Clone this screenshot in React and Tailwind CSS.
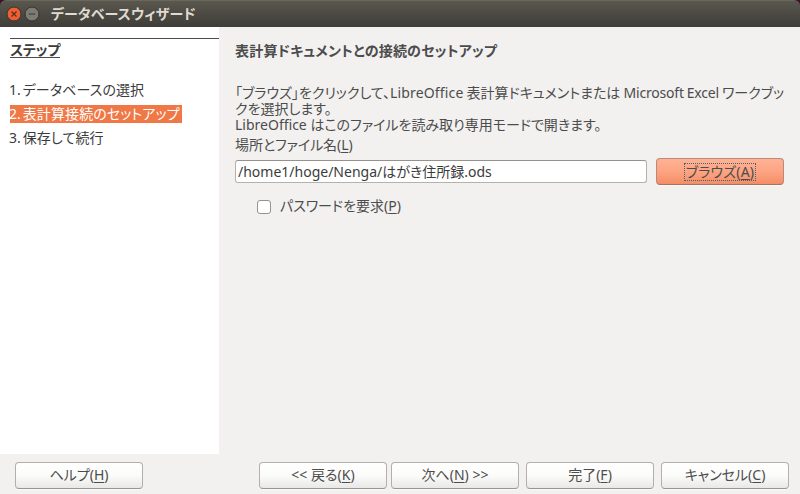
const STEPS = [
  { num: "1.", label: "データベースの選択" },
  { num: "2.", label: "表計算接続のセットアップ", active: true },
  { num: "3.", label: "保存して続行" },
];

const BUTTON_COLORS = {
  normal: "border-[#b3b0aa] border-b-[#99958e] from-white via-[#fbfbfa] to-[#e9e8e7]",
  focused: "border-[#b98a78] border-b-[#a8735c] from-[#ffb294] via-[#fca483] to-[#f58d65]",
};

function Mnemonic({ children }) {
  return (
    <span>
      (<span className="underline underline-offset-2 decoration-1">{children}</span>)
    </span>
  );
}

function Button({ children, variant = "normal", className = "" }) {
  return (
    <button
      className={`h-[27px] w-32 shrink-0 rounded-[4px] border bg-linear-to-b pb-px text-center leading-6 whitespace-nowrap shadow-[0_1px_0_#fafafa] ${BUTTON_COLORS[variant]} ${className}`}
    >
      {children}
    </button>
  );
}

function TitleBar() {
  return (
    <div className="bg-[#3b0f28]">
      <header className="flex h-[27px] items-center rounded-t-[6px] border-t border-[#6a675e] bg-linear-to-b from-[#5a574e] to-[#3e3d38] pl-[6px]">
        <svg width="34" height="16" viewBox="0 0 34 16">
          <circle cx="8" cy="8" r="7" fill="#ee6034" stroke="#35332e" />
          <path d="M5.5 5.5l5 5m0-5l-5 5" stroke="#5b2d1c" strokeWidth="1.2" />
          <circle cx="26" cy="8" r="7" fill="#7d7b73" stroke="#35332e" />
          <path d="M22.8 8h6.4" stroke="#44423c" strokeWidth="1.2" />
        </svg>
        <h1 className="ml-[11px] pb-[2px] text-[14px] font-bold tracking-[0.1px] text-[#dfdbd2]">データベースウィザード</h1>
      </header>
    </div>
  );
}

export default function App() {
  return (
    <div className="flex h-[494px] w-[800px] flex-col overflow-hidden bg-[#f2f1f0] font-['Noto_Sans','Noto_Sans_CJK_JP',sans-serif] text-[14px] text-[#4c4c4c] [font-feature-settings:'palt']">
      <TitleBar />

      <div className="flex h-[427px]">
        {/* Steps */}
        <aside className="w-[219px] shrink-0 bg-white pt-[11px] pl-[10px] text-[#3c3c3c]">
          <div className="flex border-t border-[#4c4c4c] pt-px">
            <h2 className="h-[18px] border-b border-[#4c4c4c] text-[14px] leading-[19px] font-bold tracking-[-0.2px]">ステップ</h2>
          </div>
          <ol className="mt-[23px] flex flex-col items-start gap-[6px]">
            {STEPS.map((step) => (
              <li
                key={step.num}
                className={`flex h-[18px] gap-[2px] pr-[2px] leading-[18px] whitespace-nowrap ${step.active ? "bg-[#f07746] text-white" : ""}`}
              >
                <span className="-ml-px">{step.num}</span>
                <span className="tracking-[0.1px]">{step.label}</span>
              </li>
            ))}
          </ol>
        </aside>

        {/* Connection setup */}
        <main className="flex-1 pt-[14px] pl-4">
          <h2 className="h-5 leading-5 font-bold tracking-[0.2px]">表計算ドキュメントとの接続のセットアップ</h2>
          <div className="mt-[24px] leading-4 whitespace-nowrap">
            <p className="[word-spacing:-0.5px]">
              「ブラウズ」をクリックして、<span className="tracking-[0.15px]">LibreOffice</span> 表計算ドキュメントまたは{" "}
              <span className="tracking-[-0.2px]">Microsoft Excel</span> ワークブッ
            </p>
            <p>クを選択します。</p>
            <p>LibreOffice はこのファイルを読み取り専用モードで開きます。</p>
          </div>
          <label className="mt-[3px] block h-[18px] leading-[18px] tracking-[-0.1px]">
            場所とファイル名<Mnemonic>L</Mnemonic>
          </label>
          <div className="mt-1 flex items-center gap-[9px]">
            <input
              className="h-[23px] w-[412px] rounded-[3px] border border-[#b5b2ac] border-t-[#96928b] bg-white px-[2px] pb-[2px] text-[#3c3c3c] outline-none"
              defaultValue="/home1/hoge/Nenga/はがき住所録.ods"
            />
            <Button variant="focused">
              <span className="inline-flex h-[18px] items-center border border-dotted border-[#3f6672] px-px align-middle tracking-[0.15px]">
                ブラウズ<Mnemonic>A</Mnemonic>
              </span>
            </Button>
          </div>
          <label className="mt-[12px] ml-[22px] flex h-5 items-center gap-[9px]">
            <span className="size-[14px] rounded-[3px] border border-[#96928b] bg-white" />
            <span className="pb-[3px]">
              パスワードを要求<Mnemonic>P</Mnemonic>
            </span>
          </label>
        </main>
      </div>

      <footer className="flex pt-2 pl-[15px]">
        <Button>ヘルプ<Mnemonic>H</Mnemonic></Button>
        <Button className="ml-[116px]">&lt;&lt; 戻る<Mnemonic>K</Mnemonic></Button>
        <Button className="ml-1">次へ<Mnemonic>N</Mnemonic> &gt;&gt;</Button>
        <Button className="ml-[7px]">完了<Mnemonic>F</Mnemonic></Button>
        <Button className="ml-[7px]">キャンセル<Mnemonic>C</Mnemonic></Button>
      </footer>
    </div>
  );
}
